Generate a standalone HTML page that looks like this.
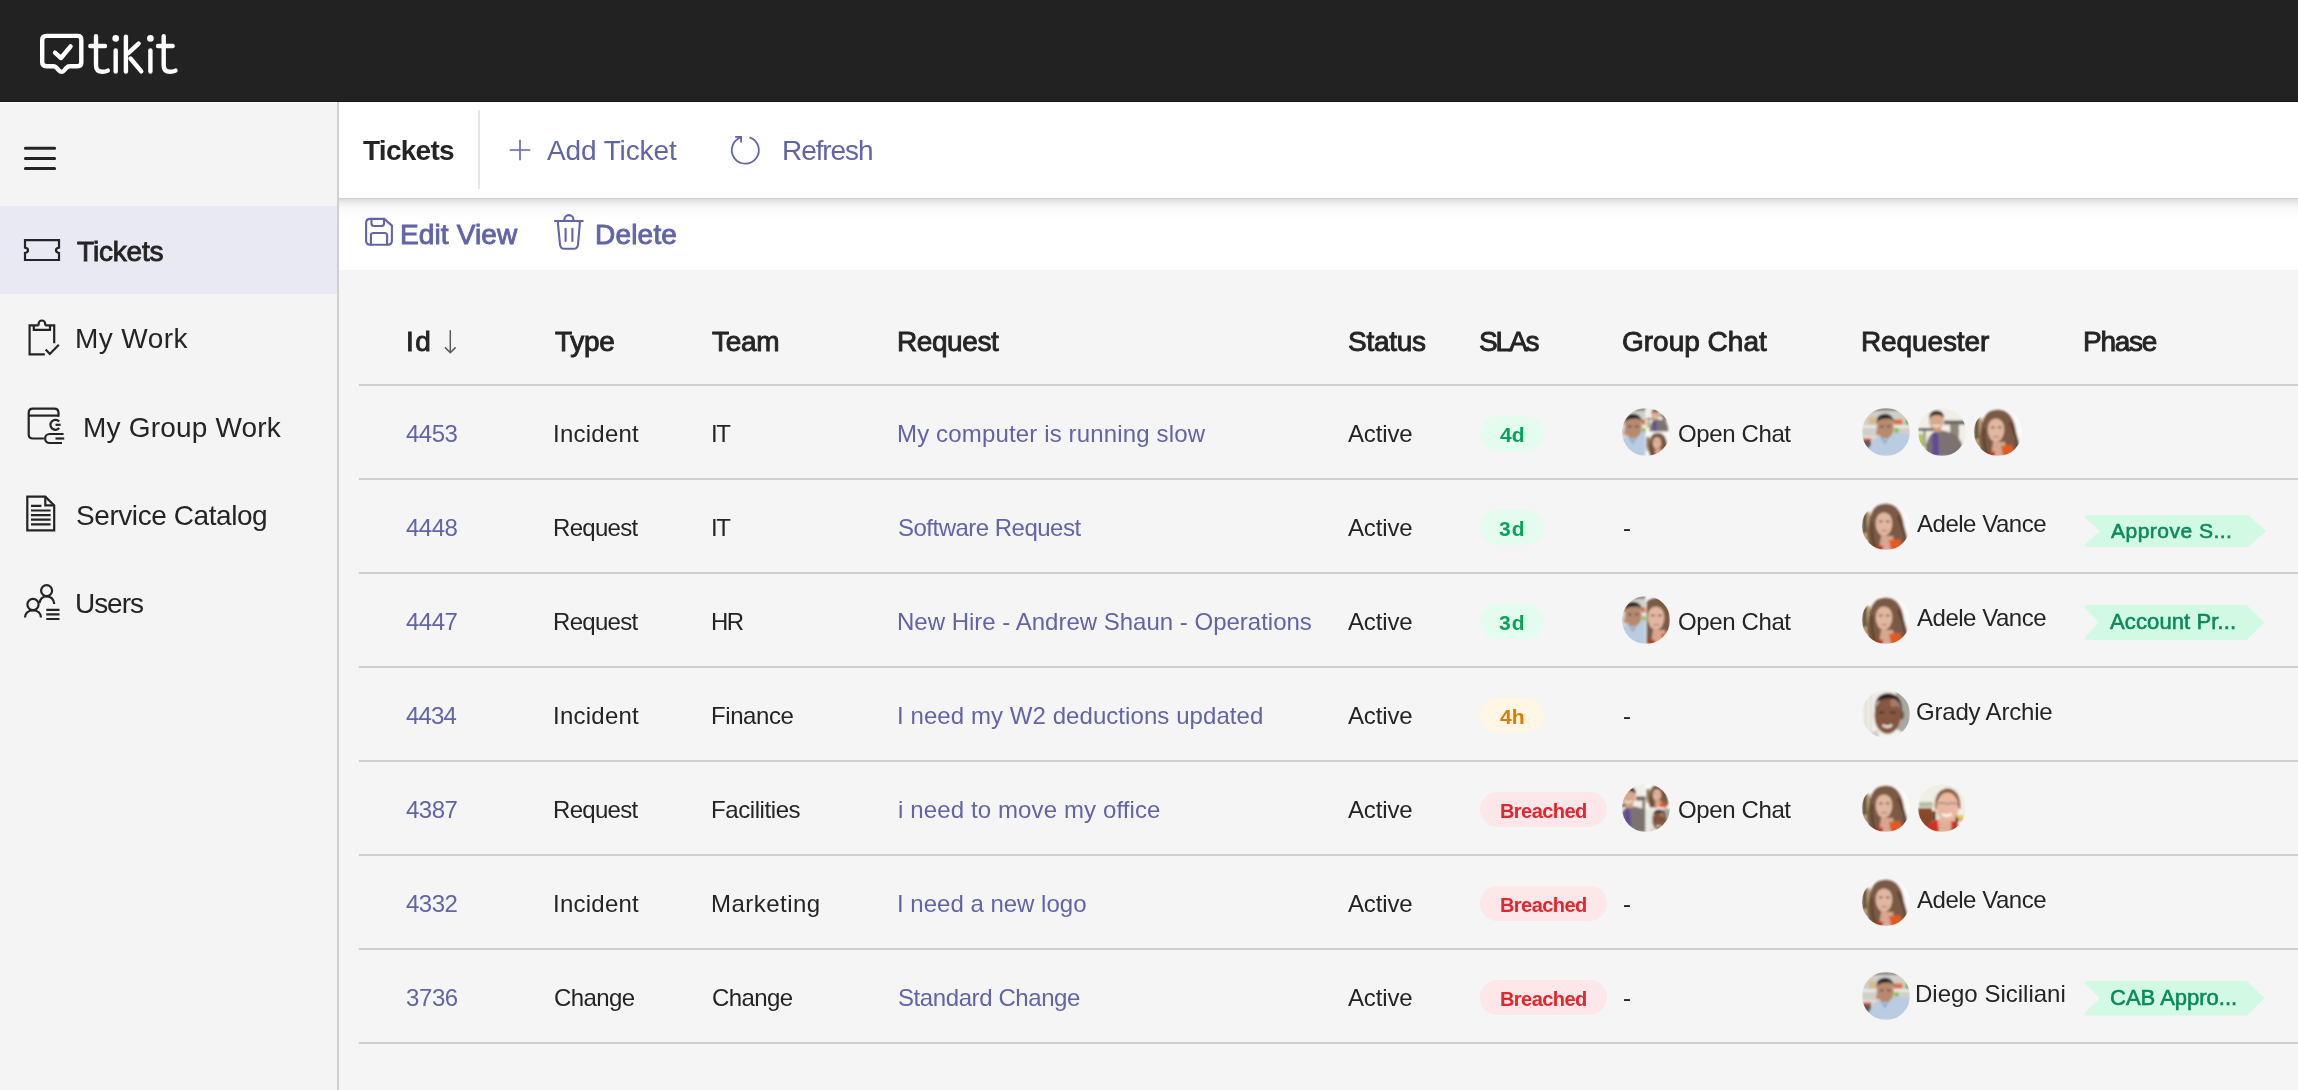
<!DOCTYPE html>
<html><head><meta charset="utf-8"><title>tikit</title>
<style>
html,body{margin:0;padding:0;width:2298px;height:1090px;overflow:hidden;background:#f5f5f5;font-family:"Liberation Sans",sans-serif;}
.t{position:absolute;white-space:nowrap;will-change:transform;}
.a{position:absolute;}
.av{position:absolute;}
</style></head><body>
<div class="a" style="left:0;top:0;width:2298px;height:101px;background:#222;"></div><div class="a" style="left:0;top:101px;width:2298px;height:1px;background:#141414;"></div><svg class="a" style="left:0;top:0" width="200" height="101" viewBox="0 0 200 101">
<g fill="none" stroke="#fff" stroke-width="4.4" stroke-linecap="round" stroke-linejoin="round">
<path d="M46.5 35.9 H77.6 Q81.3 35.9 81.3 39.6 V62.5 Q81.3 66.2 77.6 66.2 H69.8 Q67.8 66.2 66.5 67.8 L64.2 70.4 Q61.5 73.4 58.8 70.4 L56.5 67.8 Q55.2 66.2 53.2 66.2 H46.5 Q42.2 66.2 42.2 62 V40 Q42.2 35.9 46.5 35.9 Z"/>
<path d="M55 52.6 L61 58 L70.6 46.4"/>
<path d="M96 36.2 V65.5 Q96 71.8 102.5 71.8 Q105.5 71.8 107.8 70.6"/>
<path d="M90.3 46 H105"/>
<path d="M115.7 50.5 V71.6"/>
<path d="M125.9 36.7 V71.6"/>
<path d="M128.3 53.2 L138.6 43.6"/>
<path d="M130.5 58.5 L141.3 71.4"/>
<path d="M150.4 50.5 V71.6"/>
<path d="M163.7 36.2 V65.5 Q163.7 71.8 170.2 71.8 Q173.2 71.8 175.5 70.6"/>
<path d="M158 46 H172.6"/>
</g>
<circle cx="115.7" cy="38.4" r="3.3" fill="#fff"/>
<circle cx="150.4" cy="38.4" r="3.3" fill="#fff"/>
</svg>
<div class="a" style="left:0;top:102px;width:337px;height:1px;background:#fff;"></div><div class="a" style="left:0;top:103px;width:337px;height:987px;background:#f4f4f4;"></div><div class="a" style="left:337px;top:102px;width:2px;height:988px;background:#cfcfcf;"></div><div class="a" style="left:0;top:206px;width:337px;height:88px;background:#e9e9f4;"></div><svg class="a" style="left:0;top:130px" width="80" height="60" viewBox="0 130 80 60">
<g stroke="#242424" stroke-width="3" stroke-linecap="round"><path d="M25.4 148.3H54.6M25.4 158.4H54.6M25.4 168.5H54.6"/></g></svg><svg class="a" style="left:0;top:200px" width="80" height="450" viewBox="0 200 80 450">
<g fill="none" stroke="#242424" stroke-width="2.2">
<path d="M25 240.2 H59 V247.6 Q56 248 56 250.3 Q56 252.6 59 253 V260 H25 V253 Q28 252.6 28 250.3 Q28 248 25 247.6 Z"/>
<path d="M44.8 354.4 H29.6 V325.3 H38.6 M45.2 325.3 H54.2 V343.2"/>
<path d="M33.8 325.3 V329.9 H50 V325.3"/>
<path d="M38.6 325.6 V323.8 A3.3 3.3 0 0 1 45.2 323.8 V325.6"/>
<path d="M45.7 349.6 L49.8 354 L58.8 344.8"/>
<path d="M43.9 438.5 H33 Q28.7 438.5 28.7 434.2 V413 Q28.7 408.7 33 408.7 H54.2 Q58.5 408.7 58.5 413 V416.7"/>
<path d="M28.7 415.6 H58.5"/>
<path d="M59.2 421.5 A5 5 0 1 0 59.2 428.1"/>
<path d="M55.5 424.8 H60.6"/>
<path d="M63.6 434 H49.6 A4.5 4.5 0 0 0 49.6 443 H62"/>
<path d="M55.5 438.5 H64.2"/>
<path d="M27.3 496.6 H45.3 L54.2 505.5 V530.4 H27.3 Z"/>
<path d="M45.3 496.6 V505.4 H54.2"/>
<circle cx="46.6" cy="590.6" r="5.5"/>
<path d="M39.5 603 Q40.5 596.5 46.6 596.5 Q53.5 596.5 54.3 604"/>
<circle cx="33" cy="604.5" r="5.6"/>
<path d="M25 617.5 Q25.5 610.5 33 610.5 Q40.5 610.5 41 617.5"/>
</g>
<g stroke="#242424" stroke-width="2.2">
<path d="M31 505.9 H41.4 M31 510.5 H50.6 M31 515.1 H50.6 M31 519.7 H50.6 M31 524.3 H50.6"/>
<path d="M46.3 609.8 H59.5 M46.3 614.4 H59.5 M46.3 619 H59.5"/>
</g>
</svg>
<div class="t" style="left:76.7px;top:237.6px;font-size:28px;line-height:28px;color:#242424;-webkit-text-stroke:0.9px #242424;letter-spacing:-0.17px;">Tickets</div>
<div class="t" style="left:75.3px;top:325.1px;font-size:28px;line-height:28px;color:#242424;letter-spacing:0.42px;">My Work</div>
<div class="t" style="left:83.3px;top:413.6px;font-size:28px;line-height:28px;color:#242424;letter-spacing:0.19px;">My Group Work</div>
<div class="t" style="left:75.9px;top:501.6px;font-size:28px;line-height:28px;color:#242424;letter-spacing:-0.43px;">Service Catalog</div>
<div class="t" style="left:74.9px;top:589.6px;font-size:28px;line-height:28px;color:#242424;letter-spacing:-1.05px;">Users</div>
<div class="a" style="left:339px;top:102px;width:1959px;height:96px;background:#fff;"></div><div class="a" style="left:339px;top:198px;width:1959px;height:72px;background:#fff;"></div><div class="a" style="left:339px;top:198px;width:1959px;height:22px;background:linear-gradient(to bottom,rgba(0,0,0,0.18) 0px,rgba(0,0,0,0.12) 2px,rgba(0,0,0,0.07) 5px,rgba(0,0,0,0.03) 9px,rgba(0,0,0,0.01) 15px,rgba(0,0,0,0) 22px);"></div><div class="a" style="left:478px;top:110px;width:2px;height:79px;background:#e6e6e6;"></div><div class="t" style="left:363.4px;top:137.3px;font-size:28px;line-height:28px;color:#242424;font-weight:700;letter-spacing:-0.73px;">Tickets</div>
<svg class="a" style="left:500px;top:130px" width="40" height="40" viewBox="500 130 40 40"><path d="M520 139.7V160.3M509.7 150H530.3" stroke="#6264a7" stroke-width="1.6"/></svg><div class="t" style="left:547.0px;top:137.3px;font-size:28px;line-height:28px;color:#6264a7;letter-spacing:-0.11px;">Add Ticket</div>
<svg class="a" style="left:720px;top:125px" width="50" height="50" viewBox="720 125 50 50"><g fill="none" stroke="#6264a7" stroke-width="1.8"><path d="M749.5 137.3 A13.5 13.5 0 1 1 741.8 137.1"/><path d="M735.2 136.8 H741.1 V142.5"/></g></svg><div class="t" style="left:781.6px;top:137.3px;font-size:28px;line-height:28px;color:#6264a7;letter-spacing:-1.08px;">Refresh</div>
<svg class="a" style="left:355px;top:205px" width="240" height="55" viewBox="355 205 240 55"><g fill="none" stroke="#6264a7" stroke-width="2.1" stroke-linejoin="round" stroke-linecap="round">
<path d="M370.2 218.9 H384.2 L391.9 225.6 V240.5 Q391.9 244.7 387.7 244.7 H370.3 Q366.1 244.7 366.1 240.5 V223 Q366.1 218.9 370.2 218.9 Z"/>
<path d="M371.5 218.9 V223.5 Q371.5 226 374 226 H381.5 Q384 226 384 223.5 V218.9"/>
<path d="M370.9 244.7 V235.5 Q370.9 233 373.4 233 H384.6 Q387.1 233 387.1 235.5 V244.7"/>
<path d="M555 221 H582.7"/>
<path d="M564.4 221 V219.6 A4.5 4.5 0 0 1 573.4 219.6 V221"/>
<path d="M557.7 221 L560 244.5 Q560.5 248.8 564.5 248.8 H573.5 Q577.5 248.8 578 244.5 L580 221"/>
<path d="M565.6 228.8 V240.9 M572.4 228.8 V240.9"/>
</g></svg><div class="t" style="left:400.2px;top:221.1px;font-size:28px;line-height:28px;color:#6264a7;-webkit-text-stroke:0.9px #6264a7;letter-spacing:0.12px;">Edit View</div>
<div class="t" style="left:595.0px;top:221.1px;font-size:28px;line-height:28px;color:#6264a7;-webkit-text-stroke:0.9px #6264a7;letter-spacing:0.20px;">Delete</div>
<div class="t" style="left:405.7px;top:327.9px;font-size:28px;line-height:28px;color:#242424;-webkit-text-stroke:0.9px #242424;letter-spacing:1.50px;">Id</div>
<div class="t" style="left:554.5px;top:327.9px;font-size:28px;line-height:28px;color:#242424;-webkit-text-stroke:0.9px #242424;letter-spacing:-0.33px;">Type</div>
<div class="t" style="left:712.3px;top:327.9px;font-size:28px;line-height:28px;color:#242424;-webkit-text-stroke:0.9px #242424;letter-spacing:-0.33px;">Team</div>
<div class="t" style="left:896.9px;top:327.9px;font-size:28px;line-height:28px;color:#242424;-webkit-text-stroke:0.9px #242424;letter-spacing:-0.42px;">Request</div>
<div class="t" style="left:1347.5px;top:327.9px;font-size:28px;line-height:28px;color:#242424;-webkit-text-stroke:0.9px #242424;letter-spacing:-0.26px;">Status</div>
<div class="t" style="left:1479.0px;top:327.9px;font-size:28px;line-height:28px;color:#242424;-webkit-text-stroke:0.9px #242424;letter-spacing:-2.17px;">SLAs</div>
<div class="t" style="left:1621.8px;top:327.9px;font-size:28px;line-height:28px;color:#242424;-webkit-text-stroke:0.9px #242424;">Group Chat</div>
<div class="t" style="left:1860.8px;top:327.9px;font-size:28px;line-height:28px;color:#242424;-webkit-text-stroke:0.9px #242424;letter-spacing:-0.12px;">Requester</div>
<div class="t" style="left:2083.0px;top:327.9px;font-size:28px;line-height:28px;color:#242424;-webkit-text-stroke:0.9px #242424;letter-spacing:-1.25px;">Phase</div>
<svg class="a" style="left:440px;top:325px" width="24" height="34" viewBox="440 325 24 34"><g fill="none" stroke="#5a5a5a" stroke-width="1.5"><path d="M450.3 330.3V352.8M445 347.4L450.3 352.8L455.6 347.4"/></g></svg><div class="a" style="left:359px;top:384px;width:1939px;height:2px;background:#cfcfcf;"></div><div class="a" style="left:359px;top:478px;width:1939px;height:2px;background:#cfcfcf;"></div><div class="a" style="left:359px;top:572px;width:1939px;height:2px;background:#cfcfcf;"></div><div class="a" style="left:359px;top:666px;width:1939px;height:2px;background:#cfcfcf;"></div><div class="a" style="left:359px;top:760px;width:1939px;height:2px;background:#cfcfcf;"></div><div class="a" style="left:359px;top:854px;width:1939px;height:2px;background:#cfcfcf;"></div><div class="a" style="left:359px;top:948px;width:1939px;height:2px;background:#cfcfcf;"></div><div class="a" style="left:359px;top:1042px;width:1939px;height:2px;background:#cfcfcf;"></div><div class="t" style="left:406.1px;top:421.7px;font-size:24px;line-height:24px;color:#6264a7;letter-spacing:-0.50px;">4453</div>
<div class="t" style="left:553.3px;top:421.7px;font-size:24px;line-height:24px;color:#242424;letter-spacing:0.24px;">Incident</div>
<div class="t" style="left:711.0px;top:421.7px;font-size:24px;line-height:24px;color:#242424;letter-spacing:-1.50px;">IT</div>
<div class="t" style="left:897.2px;top:421.7px;font-size:24px;line-height:24px;color:#6264a7;letter-spacing:0.15px;">My computer is running slow</div>
<div class="t" style="left:1348.3px;top:421.7px;font-size:24px;line-height:24px;color:#242424;letter-spacing:-0.14px;">Active</div>
<div class="a" style="left:1480px;top:415.5px;width:64px;height:35px;border-radius:17.5px;background:#e3fcee;"></div><div class="t" style="left:1500.0px;top:424.2px;font-size:21px;line-height:21px;color:#06a35a;font-weight:700;">4d</div>
<svg class="av" style="left:1622px;top:408px" width="48" height="48"><use href="#chat1"/></svg><div class="t" style="left:1677.8px;top:421.7px;font-size:24px;line-height:24px;color:#242424;letter-spacing:-0.38px;">Open Chat</div>
<svg class="av" style="left:1862px;top:408px" width="48" height="48"><use href="#diego"/></svg><svg class="av" style="left:1918px;top:408px" width="48" height="48"><use href="#man2"/></svg><svg class="av" style="left:1974px;top:408px" width="48" height="48"><use href="#adele"/></svg><div class="t" style="left:406.1px;top:515.7px;font-size:24px;line-height:24px;color:#6264a7;letter-spacing:-0.50px;">4448</div>
<div class="t" style="left:553.3px;top:515.7px;font-size:24px;line-height:24px;color:#242424;letter-spacing:-0.70px;">Request</div>
<div class="t" style="left:711.0px;top:515.7px;font-size:24px;line-height:24px;color:#242424;letter-spacing:-1.50px;">IT</div>
<div class="t" style="left:898.2px;top:515.7px;font-size:24px;line-height:24px;color:#6264a7;letter-spacing:-0.51px;">Software Request</div>
<div class="t" style="left:1348.3px;top:515.7px;font-size:24px;line-height:24px;color:#242424;letter-spacing:-0.14px;">Active</div>
<div class="a" style="left:1480px;top:509.5px;width:64px;height:35px;border-radius:17.5px;background:#e3fcee;"></div><div class="t" style="left:1499.0px;top:518.2px;font-size:21px;line-height:21px;color:#06a35a;font-weight:700;letter-spacing:1.00px;">3d</div>
<div class="t" style="left:1622.5px;top:515.7px;font-size:24px;line-height:24px;color:#242424;">-</div>
<svg class="av" style="left:1862px;top:502px" width="48" height="48"><use href="#adele"/></svg><div class="t" style="left:1917.3px;top:511.7px;font-size:24px;line-height:24px;color:#242424;letter-spacing:-0.48px;">Adele Vance</div>
<svg class="a" style="left:0;top:0" width="2298" height="1090" viewBox="0 0 2298 1090"><path d="M2085 515 H2248 L2266 531.0 L2248 547 H2085 V544 L2100 531.0 L2085 518 Z" fill="#d1f9e4"/></svg><div class="t" style="left:2110.6px;top:520.2px;font-size:21px;line-height:21px;color:#0b8a5c;-webkit-text-stroke:0.6px #0b8a5c;letter-spacing:0.49px;">Approve S...</div>
<div class="t" style="left:406.1px;top:609.7px;font-size:24px;line-height:24px;color:#6264a7;letter-spacing:-0.50px;">4447</div>
<div class="t" style="left:553.3px;top:609.7px;font-size:24px;line-height:24px;color:#242424;letter-spacing:-0.70px;">Request</div>
<div class="t" style="left:711.0px;top:609.7px;font-size:24px;line-height:24px;color:#242424;letter-spacing:-1.50px;">HR</div>
<div class="t" style="left:897.2px;top:609.7px;font-size:24px;line-height:24px;color:#6264a7;">New Hire - Andrew Shaun - Operations</div>
<div class="t" style="left:1348.3px;top:609.7px;font-size:24px;line-height:24px;color:#242424;letter-spacing:-0.14px;">Active</div>
<div class="a" style="left:1480px;top:603.5px;width:64px;height:35px;border-radius:17.5px;background:#e3fcee;"></div><div class="t" style="left:1499.0px;top:612.2px;font-size:21px;line-height:21px;color:#06a35a;font-weight:700;letter-spacing:1.00px;">3d</div>
<svg class="av" style="left:1622px;top:596px" width="48" height="48"><use href="#chat3"/></svg><div class="t" style="left:1677.8px;top:609.7px;font-size:24px;line-height:24px;color:#242424;letter-spacing:-0.38px;">Open Chat</div>
<svg class="av" style="left:1862px;top:596px" width="48" height="48"><use href="#adele"/></svg><div class="t" style="left:1917.3px;top:605.7px;font-size:24px;line-height:24px;color:#242424;letter-spacing:-0.48px;">Adele Vance</div>
<svg class="a" style="left:0;top:0" width="2298" height="1090" viewBox="0 0 2298 1090"><path d="M2085 605 H2246.5 L2264.5 622.5 L2246.5 640 H2085 V637 L2099 622.5 L2085 608 Z" fill="#d1f9e4"/></svg><div class="t" style="left:2109.5px;top:611.4px;font-size:22px;line-height:22px;color:#0b8a5c;-webkit-text-stroke:0.6px #0b8a5c;letter-spacing:0.12px;">Account Pr...</div>
<div class="t" style="left:406.1px;top:703.7px;font-size:24px;line-height:24px;color:#6264a7;letter-spacing:-0.83px;">4434</div>
<div class="t" style="left:553.3px;top:703.7px;font-size:24px;line-height:24px;color:#242424;letter-spacing:0.24px;">Incident</div>
<div class="t" style="left:711.0px;top:703.7px;font-size:24px;line-height:24px;color:#242424;letter-spacing:-0.43px;">Finance</div>
<div class="t" style="left:897.2px;top:703.7px;font-size:24px;line-height:24px;color:#6264a7;letter-spacing:0.07px;">I need my W2 deductions updated</div>
<div class="t" style="left:1348.3px;top:703.7px;font-size:24px;line-height:24px;color:#242424;letter-spacing:-0.14px;">Active</div>
<div class="a" style="left:1480px;top:697.5px;width:64px;height:35px;border-radius:17.5px;background:#fff6e5;"></div><div class="t" style="left:1500.0px;top:706.2px;font-size:21px;line-height:21px;color:#e27a00;font-weight:700;">4h</div>
<div class="t" style="left:1622.5px;top:703.7px;font-size:24px;line-height:24px;color:#242424;">-</div>
<svg class="av" style="left:1862px;top:690px" width="48" height="48"><use href="#grady"/></svg><div class="t" style="left:1916.3px;top:699.7px;font-size:24px;line-height:24px;color:#242424;letter-spacing:-0.19px;">Grady Archie</div>
<div class="t" style="left:406.1px;top:797.7px;font-size:24px;line-height:24px;color:#6264a7;letter-spacing:-0.50px;">4387</div>
<div class="t" style="left:553.3px;top:797.7px;font-size:24px;line-height:24px;color:#242424;letter-spacing:-0.70px;">Request</div>
<div class="t" style="left:711.0px;top:797.7px;font-size:24px;line-height:24px;color:#242424;letter-spacing:-0.42px;">Facilities</div>
<div class="t" style="left:898.2px;top:797.7px;font-size:24px;line-height:24px;color:#6264a7;letter-spacing:0.12px;">i need to move my office</div>
<div class="t" style="left:1348.3px;top:797.7px;font-size:24px;line-height:24px;color:#242424;letter-spacing:-0.14px;">Active</div>
<div class="a" style="left:1480px;top:791.5px;width:127px;height:35px;border-radius:17.5px;background:#fde7e8;"></div><div class="t" style="left:1500.0px;top:801.1px;font-size:20px;line-height:20px;color:#e1262e;font-weight:700;letter-spacing:-0.57px;">Breached</div>
<svg class="av" style="left:1622px;top:784px" width="48" height="48"><use href="#chat5"/></svg><div class="t" style="left:1677.8px;top:797.7px;font-size:24px;line-height:24px;color:#242424;letter-spacing:-0.38px;">Open Chat</div>
<svg class="av" style="left:1862px;top:784px" width="48" height="48"><use href="#adele"/></svg><svg class="av" style="left:1918px;top:784px" width="48" height="48"><use href="#glasses"/></svg><div class="t" style="left:406.1px;top:891.7px;font-size:24px;line-height:24px;color:#6264a7;letter-spacing:-0.50px;">4332</div>
<div class="t" style="left:553.3px;top:891.7px;font-size:24px;line-height:24px;color:#242424;letter-spacing:0.24px;">Incident</div>
<div class="t" style="left:711.0px;top:891.7px;font-size:24px;line-height:24px;color:#242424;letter-spacing:0.47px;">Marketing</div>
<div class="t" style="left:897.2px;top:891.7px;font-size:24px;line-height:24px;color:#6264a7;">I need a new logo</div>
<div class="t" style="left:1348.3px;top:891.7px;font-size:24px;line-height:24px;color:#242424;letter-spacing:-0.14px;">Active</div>
<div class="a" style="left:1480px;top:885.5px;width:127px;height:35px;border-radius:17.5px;background:#fde7e8;"></div><div class="t" style="left:1500.0px;top:895.1px;font-size:20px;line-height:20px;color:#e1262e;font-weight:700;letter-spacing:-0.57px;">Breached</div>
<div class="t" style="left:1622.5px;top:891.7px;font-size:24px;line-height:24px;color:#242424;">-</div>
<svg class="av" style="left:1862px;top:878px" width="48" height="48"><use href="#adele"/></svg><div class="t" style="left:1917.3px;top:887.7px;font-size:24px;line-height:24px;color:#242424;letter-spacing:-0.48px;">Adele Vance</div>
<div class="t" style="left:406.2px;top:985.7px;font-size:24px;line-height:24px;color:#6264a7;letter-spacing:-0.40px;">3736</div>
<div class="t" style="left:554.3px;top:985.7px;font-size:24px;line-height:24px;color:#242424;letter-spacing:-0.60px;">Change</div>
<div class="t" style="left:712.0px;top:985.7px;font-size:24px;line-height:24px;color:#242424;letter-spacing:-0.60px;">Change</div>
<div class="t" style="left:898.2px;top:985.7px;font-size:24px;line-height:24px;color:#6264a7;letter-spacing:-0.41px;">Standard Change</div>
<div class="t" style="left:1348.3px;top:985.7px;font-size:24px;line-height:24px;color:#242424;letter-spacing:-0.14px;">Active</div>
<div class="a" style="left:1480px;top:979.5px;width:127px;height:35px;border-radius:17.5px;background:#fde7e8;"></div><div class="t" style="left:1500.0px;top:989.1px;font-size:20px;line-height:20px;color:#e1262e;font-weight:700;letter-spacing:-0.57px;">Breached</div>
<div class="t" style="left:1622.5px;top:985.7px;font-size:24px;line-height:24px;color:#242424;">-</div>
<svg class="av" style="left:1862px;top:972px" width="48" height="48"><use href="#diego"/></svg><div class="t" style="left:1915.3px;top:981.7px;font-size:24px;line-height:24px;color:#242424;">Diego Siciliani</div>
<svg class="a" style="left:0;top:0" width="2298" height="1090" viewBox="0 0 2298 1090"><path d="M2085 981 H2246.8 L2264.7 998.25 L2246.8 1015.5 H2085 V1012.5 L2100 998.25 L2085 984 Z" fill="#d1f9e4"/></svg><div class="t" style="left:2110.3px;top:986.9px;font-size:22px;line-height:22px;color:#0b8a5c;-webkit-text-stroke:0.6px #0b8a5c;">CAB Appro...</div>
<svg width="0" height="0" style="position:absolute">
<defs>
<clipPath id="cc"><circle cx="24" cy="24" r="24"/></clipPath>
<clipPath id="rh"><rect x="24" y="0" width="24" height="48"/></clipPath>
<filter id="bl" x="-10%" y="-10%" width="120%" height="120%"><feGaussianBlur stdDeviation="0.9"/></filter>
<symbol id="diego_raw" viewBox="0 0 48 48"><g>
<rect x="-2" y="-2" width="52" height="52" fill="#d2cfca"/>
<rect x="-2" y="-2" width="52" height="5" fill="#e6e4df"/>
<rect x="10" y="0" width="26" height="3" fill="#8a8580"/>
<rect x="-2" y="17" width="52" height="3" fill="#e9e8e4"/>
<rect x="-2" y="28" width="52" height="2" fill="#e3e1dc"/>
<rect x="6.5" y="9" width="7.5" height="8" fill="#d6bd8c"/>
<rect x="32" y="11.5" width="8.5" height="5" fill="#df6e3e"/>
<rect x="43.5" y="11" width="4" height="6" fill="#6cbd48"/>
<rect x="32.5" y="20" width="4" height="4.5" fill="#7dbf4b"/>
<rect x="14" y="23" width="2.5" height="4" fill="#df7b3a"/>
<rect x="1" y="30.5" width="8" height="2.5" fill="#cf4a3a"/>
<rect x="0" y="33" width="9" height="15" fill="#5a5855"/>
<path d="M5 42 L16 27.5 L23 31 L29 24.5 L48 26 V50 H5 Z" fill="#b9cce1"/>
<path d="M18 28 L23 33 L28 27 L26 31 L23 36 L20 32 Z" fill="#8aa2c4"/>
<ellipse cx="23.2" cy="19.5" rx="8.6" ry="11" fill="#b78a70"/>
<path d="M14.5 16.5 Q14 6 23 5.8 Q32 6 32 16 Q31 11 27 10.5 Q20 10 16.5 12.5 Q15 14 14.5 16.5 Z" fill="#2a2624"/>
<path d="M18 18.5 H21.5 M25 18.5 H28.5" stroke="#5a4034" stroke-width="1.4"/>
</g></symbol>
<symbol id="man2_raw" viewBox="0 0 48 48"><g>
<rect x="-2" y="-2" width="52" height="52" fill="#f1eee8"/>
<rect x="-2" y="20" width="20" height="3" fill="#6e6258"/>
<rect x="26" y="12.5" width="24" height="4" fill="#6e6258"/>
<rect x="32" y="16" width="9" height="14" fill="#8e867c"/>
<rect x="-2" y="26" width="7" height="13" fill="#b1cc52"/>
<rect x="5" y="23" width="3" height="16" fill="#a8a49c"/>
<path d="M7 50 Q7 27 18 23 L24 22.5 Q40 25 44 36 L45 50 Z" fill="#7c7370"/>
<path d="M14 26 L17 24.5 L20 26 L21 48 H14.5 Z" fill="#62489a"/>
<rect x="16" y="17" width="7" height="7" fill="#c99878"/>
<ellipse cx="18.3" cy="13" rx="7.2" ry="9" fill="#d8a888"/>
<path d="M11 11 Q11 2.5 18.5 2.5 Q26.5 2.5 26 11 Q24.5 7 19 7 Q13 7 11 11 Z" fill="#3a2a22"/>
<path d="M15 17 Q18.5 19.5 22 17" stroke="#fff" stroke-width="1.2" fill="none"/>
</g></symbol>
<symbol id="adele_raw" viewBox="0 0 48 48"><g>
<rect x="-2" y="-2" width="52" height="52" fill="#fafafa"/>
<path d="M-2 8 L8 10 L8 38 L-2 38 Z" fill="#bba47a"/>
<path d="M0 12 L5 11 L5 30 L0 32 Z" fill="#6f5a3e"/>
<path d="M8 48 Q3 36 6.5 22 Q8 8 15 3.5 Q22 0 30 2.5 Q38 6 41 18 Q43 30 45 40 L40 48 Z" fill="#7a5a44"/>
<path d="M36 14 Q42 26 44 38" stroke="#5e4232" stroke-width="3" fill="none"/>
<path d="M10 20 Q9 34 13 46" stroke="#5e4232" stroke-width="2.5" fill="none"/>
<path d="M19 34 L31 34 L34 48 H17 Z" fill="#d9a690"/>
<ellipse cx="22" cy="21.5" rx="8.3" ry="12.5" fill="#e2b7a0"/>
<path d="M13.5 17 Q15 7 23 7 Q30 8 31 17 Q27 10.5 22 10.5 Q16 11 13.5 17 Z" fill="#7a5a44"/>
<path d="M17 19.5 H20.5 M24 19.5 H27.5" stroke="#6a4a3c" stroke-width="1.3"/>
<path d="M19.5 28.5 Q22 29.5 25 28.5" stroke="#b07070" stroke-width="1.2" fill="none"/>
<path d="M27 38 L38 37 L41 48 H29 Z" fill="#e25a22"/>
<path d="M14 43 L21 44 L21 48 H14 Z" fill="#b23a20"/>
</g></symbol>
<symbol id="grady_raw" viewBox="0 0 48 48"><g>
<rect x="-2" y="-2" width="52" height="52" fill="#efede6"/>
<rect x="3" y="0" width="1.5" height="48" fill="#d8d6cc"/>
<rect x="8" y="0" width="1.5" height="48" fill="#dcdad0"/>
<path d="M34 0 H50 V50 H34 Z" fill="#a9a79f"/>
<path d="M8 50 Q10 40 20 39 L34 39 Q42 41 44 50 Z" fill="#f2f2ee"/>
<path d="M8 48 Q9 41 16 40 L17 48 Z" fill="#cfcfc8"/>
<ellipse cx="39.5" cy="25" rx="2.6" ry="4.5" fill="#7a4e3e"/>
<ellipse cx="25.5" cy="25.5" rx="13" ry="18.5" fill="#85573f"/>
<ellipse cx="32" cy="13" rx="4" ry="4" fill="#a87a66"/>
<path d="M13 20 Q12.5 3.5 26 3.2 Q39.5 3.5 40 20 L38.5 21 Q38 9 30 8.5 Q20 8 15 12 Q13.5 15 14 21 Z" fill="#2c2420"/>
<path d="M17 22.5 H22 M28.5 22.5 H33.5" stroke="#3a2820" stroke-width="1.6"/>
<path d="M20.5 35 Q25 38.5 30 35" stroke="#f4f0ea" stroke-width="2.2" fill="none"/>
</g></symbol>
<symbol id="glasses_raw" viewBox="0 0 48 48"><g>
<rect x="-2" y="-2" width="52" height="52" fill="#f1eee6"/>
<rect x="1" y="18" width="14" height="5" fill="#b9bea2"/>
<path d="M-2 24 H14 V48 H-2 Z" fill="#8a4828"/>
<rect x="14" y="27" width="4" height="10" fill="#6a5040"/>
<rect x="39.5" y="31" width="6" height="4.5" fill="#d8d44e"/>
<rect x="40" y="35" width="5" height="2" fill="#e09050"/>
<path d="M17 26 Q15.5 6 29.5 4.3 Q43 5.5 42.5 25 L40 24 Q40 10 29.5 9 Q20 10 19 24 Z" fill="#8a5a3a"/>
<path d="M38 30 Q41 34 40 40 L36 42 Z" fill="#6a4028"/>
<path d="M6 50 Q8 39 18 36 L34 36 Q41 38 44 50 Z" fill="#d03222"/>
<path d="M19.5 35 L33.5 35 L33 48 L21 48 Z" fill="#e0ae98"/>
<ellipse cx="29.5" cy="23.5" rx="11" ry="15" fill="#e8b8a0"/>
<path d="M20 19.5 Q24.5 18 29 20 Q34 18 40 20" stroke="#777068" stroke-width="1" fill="none"/>
<path d="M24 30 Q28.5 33.5 33.5 30" stroke="#fbfbf8" stroke-width="2.2" fill="none"/>
</g></symbol>
</defs></svg>
<svg width="0" height="0" style="position:absolute"><defs><symbol id="diego" viewBox="0 0 48 48"><g clip-path="url(#cc)"><g filter="url(#bl)"><use href="#diego_raw" width="48" height="48"/></g></g></symbol><symbol id="man2" viewBox="0 0 48 48"><g clip-path="url(#cc)"><g filter="url(#bl)"><use href="#man2_raw" width="48" height="48"/></g></g></symbol><symbol id="adele" viewBox="0 0 48 48"><g clip-path="url(#cc)"><g filter="url(#bl)"><use href="#adele_raw" width="48" height="48"/></g></g></symbol><symbol id="grady" viewBox="0 0 48 48"><g clip-path="url(#cc)"><g filter="url(#bl)"><use href="#grady_raw" width="48" height="48"/></g></g></symbol><symbol id="glasses" viewBox="0 0 48 48"><g clip-path="url(#cc)"><g filter="url(#bl)"><use href="#glasses_raw" width="48" height="48"/></g></g></symbol><symbol id="chat1" viewBox="0 0 48 48"><g clip-path="url(#cc)"><g filter="url(#bl)"><use href="#diego_raw" x="-12" y="0" width="48" height="48"/><g transform="translate(24 0) scale(0.5)"><use href="#man2_raw" width="48" height="48"/></g><g transform="translate(24 24) scale(0.5)"><use href="#adele_raw" width="48" height="48"/></g><rect x="23.5" y="0" width="1" height="48" fill="#fff"/><rect x="24" y="23.5" width="24" height="1" fill="#fff"/></g></g></symbol><symbol id="chat3" viewBox="0 0 48 48"><g clip-path="url(#cc)"><g filter="url(#bl)"><use href="#diego_raw" x="-12" y="0" width="48" height="48"/><g clip-path="url(#rh)"><use href="#adele_raw" x="12" y="0" width="48" height="48"/></g><rect x="23.5" y="0" width="1" height="48" fill="#fff"/></g></g></symbol><symbol id="chat5" viewBox="0 0 48 48"><g clip-path="url(#cc)"><g filter="url(#bl)"><use href="#man2_raw" x="-12" y="0" width="48" height="48"/><g transform="translate(24 0) scale(0.5)"><use href="#adele_raw" width="48" height="48"/></g><g transform="translate(24 24) scale(0.5)"><use href="#grady_raw" width="48" height="48"/></g><rect x="23.5" y="0" width="1" height="48" fill="#fff"/><rect x="24" y="23.5" width="24" height="1" fill="#fff"/></g></g></symbol></defs></svg></body></html>
